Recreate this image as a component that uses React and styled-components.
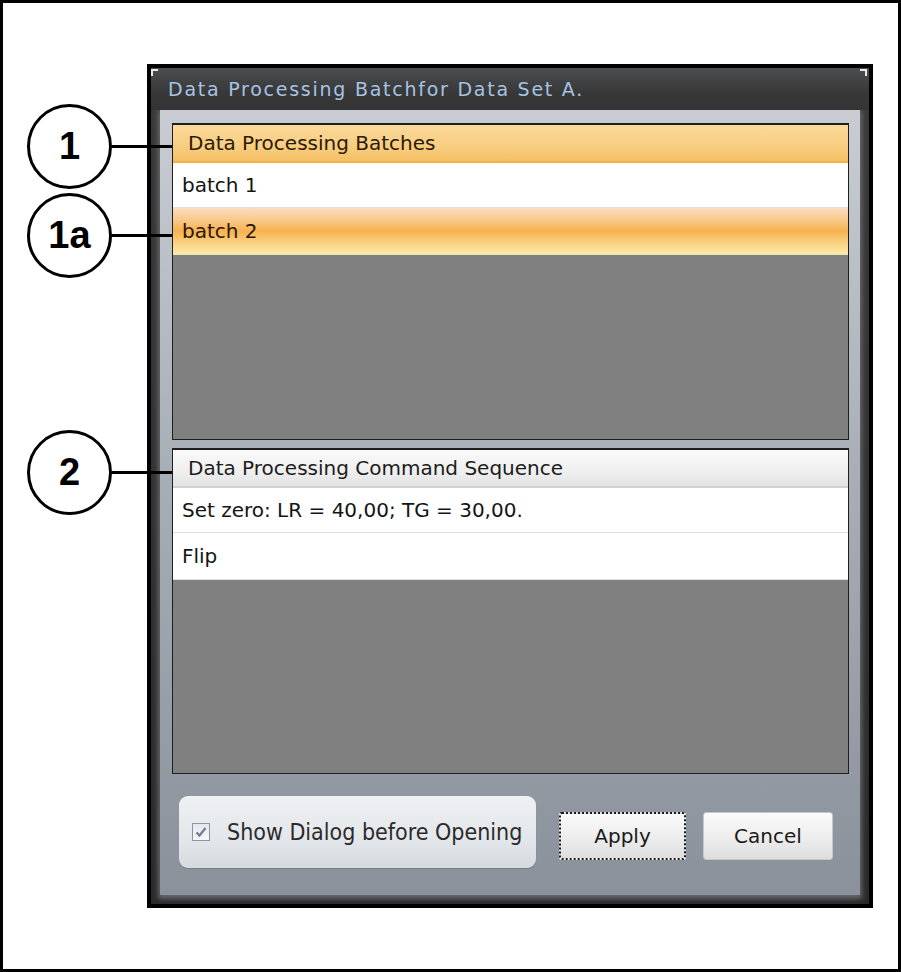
import React from 'react';
import styled, { createGlobalStyle } from 'styled-components';

const Global = createGlobalStyle`
  body {
    margin: 0;
    background: #fff;
  }
`;

const Frame = styled.div`
  position: relative;
  box-sizing: border-box;
  width: 901px;
  height: 972px;
  border: 3px solid #000;
  background: #fff;
  padding: 61px 0 0 144px;
  font-family: "DejaVu Sans", sans-serif;
`;

// ダイアログ

const Window = styled.div`
  box-sizing: border-box;
  width: 726px;
  height: 844px;
  background: #000;
  padding: 4px;
  display: flex;
`;

const Chrome = styled.div`
  flex: 1;
  display: flex;
  flex-direction: column;
  background: linear-gradient(to bottom, #3a3a3a, #2a2a2a);
`;

const TitleBar = styled.div`
  position: relative;
  height: 42px;
  display: flex;
  align-items: center;
  padding-left: 17px;
  background: linear-gradient(to bottom, #4c4e51 0%, #414244 30%, #383838 60%, #343434 100%);
  color: #a7c3e3;
  font-size: 19px;
  letter-spacing: 1.75px;
  &::before,
  &::after {
    content: '';
    position: absolute;
    top: 1px;
    width: 5px;
    height: 5px;
    border-top: 2px solid #e8e8e8;
  }
  &::before {
    left: 0;
    border-left: 2px solid #e8e8e8;
  }
  &::after {
    right: 2px;
    border-right: 2px solid #e8e8e8;
  }
`;

const Body = styled.div`
  flex: 1;
  display: flex;
  flex-direction: column;
  gap: 8px;
  margin: 0 9px 9px 9px;
  padding: 13px 11px 0 12px;
  background: linear-gradient(to bottom, #c9cdd3 0%, #a9afb7 45%, #8b919a 100%);
  box-shadow: 0 2px 5px 2px rgba(110, 114, 120, 0.85);
`;

const Panel = styled.div`
  box-sizing: border-box;
  height: ${(p) => p.$height}px;
  display: flex;
  flex-direction: column;
  background: #808080;
  border: 1px solid #1e1e1e;
  border-top-width: 2px;
`;

const Header = styled.div`
  box-sizing: border-box;
  height: 38px;
  display: flex;
  align-items: center;
  padding-left: 15px;
  font-size: 20px;
  color: ${(p) => (p.$accent ? '#2a1a06' : '#1c1c1c')};
  background: ${(p) =>
    p.$accent
      ? 'linear-gradient(to bottom, #fbd99a 0%, #f8cd80 60%, #f5c064 100%)'
      : 'linear-gradient(to bottom, #fafafa 0%, #efefef 60%, #e2e2e2 100%)'};
  border-bottom: 2px solid ${(p) => (p.$accent ? '#f3b24a' : '#cfd1d4')};
`;

const Row = styled.div`
  box-sizing: border-box;
  height: ${(p) => p.$height || 46}px;
  display: flex;
  align-items: center;
  padding-left: 9px;
  font-size: 20px;
  color: ${(p) => (p.$selected ? '#2a1606' : '#141414')};
  background: ${(p) =>
    p.$selected
      ? 'linear-gradient(to bottom, #fadcbf 0%, #f9c98d 25%, #f7b24f 50%, #fbd68a 80%, #fdeba5 100%)'
      : '#fff'};
  border-bottom: 1px solid ${(p) => (p.$selected ? '#e9e2c8' : '#dde0e5')};
`;

// 下部

const Footer = styled.div`
  display: flex;
  align-items: flex-start;
  margin-top: 14px;
  padding-left: 7px;
`;

const GroupBox = styled.div`
  box-sizing: border-box;
  width: 357px;
  height: 72px;
  display: flex;
  align-items: center;
  gap: 17px;
  padding-left: 13px;
  border-radius: 9px;
  background: linear-gradient(to bottom, #eef0f3 0%, #e3e6ea 60%, #d6d9de 100%);
  box-shadow: 0 1px 1px rgba(0, 0, 0, 0.15);
`;

const CheckBox = styled.span`
  box-sizing: border-box;
  width: 18px;
  height: 18px;
  display: flex;
  align-items: center;
  justify-content: center;
  border: 1px solid #8b96a3;
  background: linear-gradient(to bottom, #e4e7eb, #f6f7f9);
`;

const Label = styled.span`
  font-family: "DejaVu Sans Condensed", "DejaVu Sans", sans-serif;
  font-size: 23px;
  color: #2b2b2b;
`;

const Button = styled.div`
  box-sizing: border-box;
  width: ${(p) => p.$width}px;
  height: 48px;
  margin-top: 16px;
  margin-left: ${(p) => p.$gap}px;
  display: flex;
  align-items: center;
  justify-content: center;
  font-size: 20px;
  color: #1a1a1a;
  border-radius: 3px;
  background: linear-gradient(to bottom, #fafafa 0%, #eeeeee 50%, #dedede 100%);
  border: ${(p) => (p.$focused ? '2px dotted #1a1a1a' : '1px solid #c4c7cb')};
`;

// 注記

const Callout = styled.div`
  position: absolute;
  left: 24px;
  top: ${(p) => p.$top}px;
  display: flex;
  align-items: center;
`;

const Circle = styled.div`
  box-sizing: border-box;
  width: 85px;
  height: 85px;
  border: 3px solid #000;
  border-radius: 50%;
  background: #fff;
  display: flex;
  align-items: center;
  justify-content: center;
  font-family: "Liberation Sans", Arial, sans-serif;
  font-weight: bold;
  font-size: 38px;
  color: #000;
`;

const Leader = styled.div`
  width: 60px;
  height: 3px;
  background: #000;
`;

function Check() {
  return (
    <svg width="14" height="14" viewBox="0 0 14 14">
      <path d="M2.5 7.5 L5.5 10.5 L11.5 3" fill="none" stroke="#6d7d92" strokeWidth="2.2" />
    </svg>
  );
}

const callouts = [
  { label: '1', top: 101 },
  { label: '1a', top: 190 },
  { label: '2', top: 427 },
];

export default function App() {
  return (
    <Frame>
      <Global />
      <Window>
        <Chrome>
          <TitleBar>Data Processing Batchfor Data Set A.</TitleBar>
          <Body>
            <Panel $height={317}>
              <Header $accent>Data Processing Batches</Header>
              <Row $height={45}>batch 1</Row>
              <Row $height={47} $selected>batch 2</Row>
            </Panel>
            <Panel $height={326}>
              <Header>Data Processing Command Sequence</Header>
              <Row $height={45}>Set zero: LR = 40,00; TG = 30,00.</Row>
              <Row $height={47}>Flip</Row>
            </Panel>
            <Footer>
              <GroupBox>
                <CheckBox>
                  <Check />
                </CheckBox>
                <Label>Show Dialog before Opening</Label>
              </GroupBox>
              <Button $width={127} $gap={23} $focused>Apply</Button>
              <Button $width={130} $gap={17}>Cancel</Button>
            </Footer>
          </Body>
        </Chrome>
      </Window>
      {callouts.map((c) => (
        <Callout key={c.label} $top={c.top}>
          <Circle>{c.label}</Circle>
          <Leader />
        </Callout>
      ))}
    </Frame>
  );
}
